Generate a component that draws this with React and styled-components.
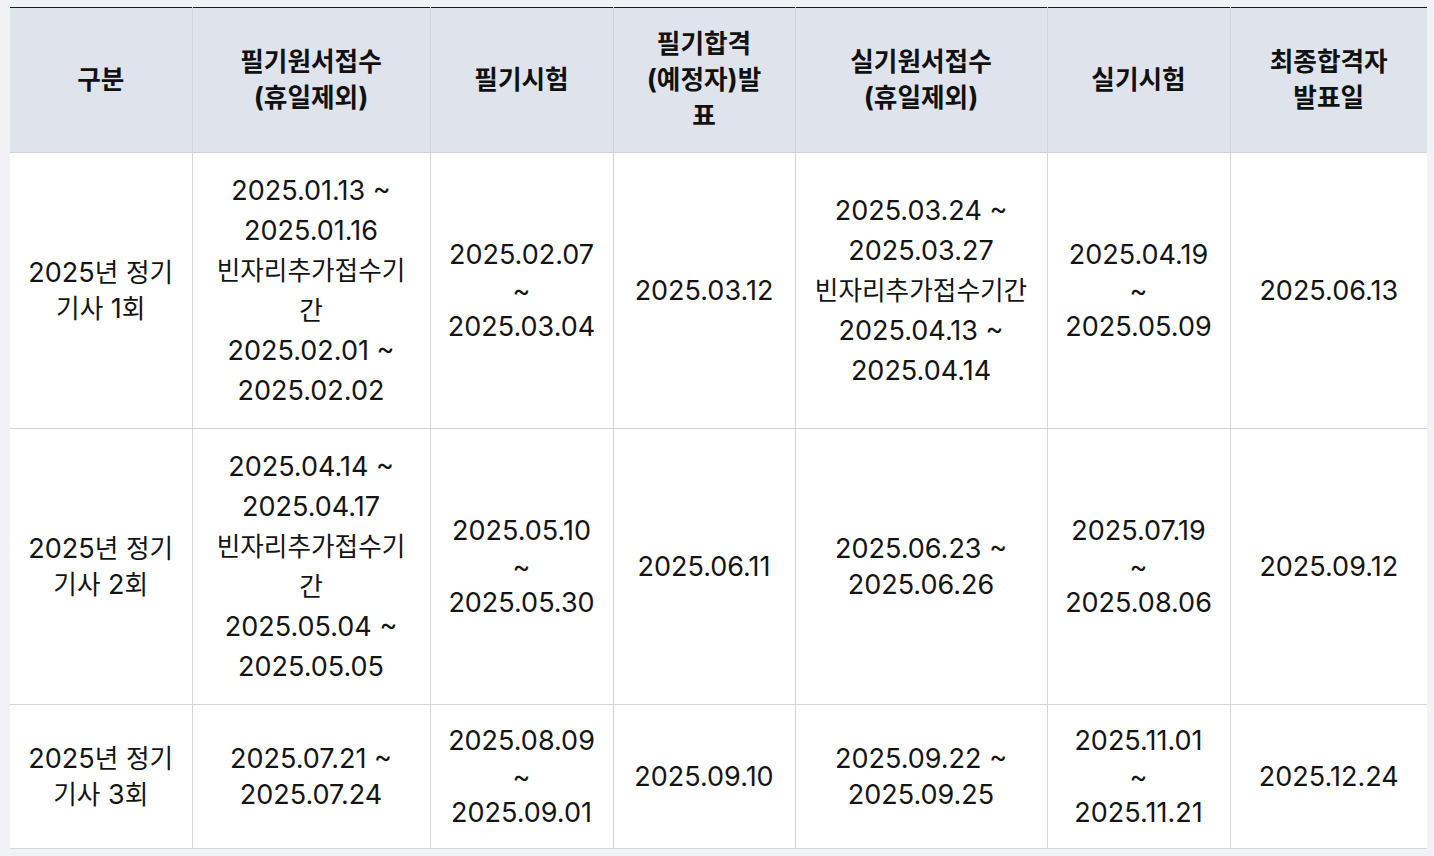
import React from "react";
import styled, { createGlobalStyle } from "styled-components";

const GlobalStyle = createGlobalStyle`
  html, body {
    margin: 0;
    padding: 0;
    background: #f0f2f5;
  }
  body {
    font-family: Inter, "Noto Sans CJK KR", sans-serif;
    color: #141414;
  }
`;

const headers = [
  ["구분"],
  ["필기원서접수", "(휴일제외)"],
  ["필기시험"],
  ["필기합격", "(예정자)발", "표"],
  ["실기원서접수", "(휴일제외)"],
  ["실기시험"],
  ["최종합격자", "발표일"],
];

const widths = [182, 238, 183, 182, 252, 183, 197];

const rows = [
  [
    ["2025년 정기", "기사 1회"],
    ["2025.01.13 ~", "2025.01.16", "빈자리추가접수기", "간", "2025.02.01 ~", "2025.02.02"],
    ["2025.02.07", "~", "2025.03.04"],
    ["2025.03.12"],
    ["2025.03.24 ~", "2025.03.27", "빈자리추가접수기간", "2025.04.13 ~", "2025.04.14"],
    ["2025.04.19", "~", "2025.05.09"],
    ["2025.06.13"],
  ],
  [
    ["2025년 정기", "기사 2회"],
    ["2025.04.14 ~", "2025.04.17", "빈자리추가접수기", "간", "2025.05.04 ~", "2025.05.05"],
    ["2025.05.10", "~", "2025.05.30"],
    ["2025.06.11"],
    ["2025.06.23 ~", "2025.06.26"],
    ["2025.07.19", "~", "2025.08.06"],
    ["2025.09.12"],
  ],
  [
    ["2025년 정기", "기사 3회"],
    ["2025.07.21 ~", "2025.07.24"],
    ["2025.08.09", "~", "2025.09.01"],
    ["2025.09.10"],
    ["2025.09.22 ~", "2025.09.25"],
    ["2025.11.01", "~", "2025.11.21"],
    ["2025.12.24"],
  ],
];

// hangul is set a little smaller than the latin digits, like the original font
const Text = ({ children }) =>
  children.split(/([가-힣]+)/).map((part, i) =>
    /[가-힣]/.test(part) ? <Ko key={i}>{part}</Ko> : part
  );

const Lines = ({ lines }) => (
  <LineStack $loose={lines.length > 3}>
    {lines.map((line, i) => (
      <Line key={i}>
        <Text>{line}</Text>
      </Line>
    ))}
  </LineStack>
);

const App = () => {
  return (
    <Page>
      <GlobalStyle />
      <Table>
        <colgroup>
          {widths.map((w, i) => (
            <col key={i} style={{ width: w }} />
          ))}
        </colgroup>
        <thead>
          <tr>
            {headers.map((h, i) => (
              <HeadCell key={i}>
                <Lines lines={h} />
              </HeadCell>
            ))}
          </tr>
        </thead>
        <tbody>
          {rows.map((row, r) => (
            <tr key={r}>
              {row.map((cell, c) => (
                <Cell key={c}>
                  <Lines lines={cell} />
                </Cell>
              ))}
            </tr>
          ))}
        </tbody>
      </Table>
    </Page>
  );
};

const Page = styled.div`
  padding: 7px 7px 8px 10px;
`;

const Table = styled.table`
  width: 1417px;
  table-layout: fixed;
  border-collapse: collapse;
  border-top: 1px solid #1a1a1a;
  background: #fff;
`;

const HeadCell = styled.th`
  background: #dfe3eb;
  font-size: 27px;
  font-weight: 700;
  padding: 18px 8px;
  text-align: center;
  vertical-align: middle;
  border-left: 1px solid #d0d3d8;
  border-bottom: 1px solid #d0d3d8;
  color: #111;

  &:first-child {
    border-left: none;
  }
`;

const Cell = styled.td`
  font-size: 27px;
  font-weight: 400;
  padding: 18px 8px 17px;
  text-align: center;
  vertical-align: middle;
  border-left: 1px solid #d6d6d6;
  border-bottom: 1px solid #d6d6d6;

  &:first-child {
    border-left: none;
  }
`;

const LineStack = styled.div`
  display: flex;
  flex-direction: column;
  align-items: center;
  line-height: ${(p) => (p.$loose ? "40px" : "36px")};
`;

const Line = styled.div`
  white-space: nowrap;
`;

const Ko = styled.span`
  font-size: 0.95em;
  line-height: 1;
`;

export default App;
